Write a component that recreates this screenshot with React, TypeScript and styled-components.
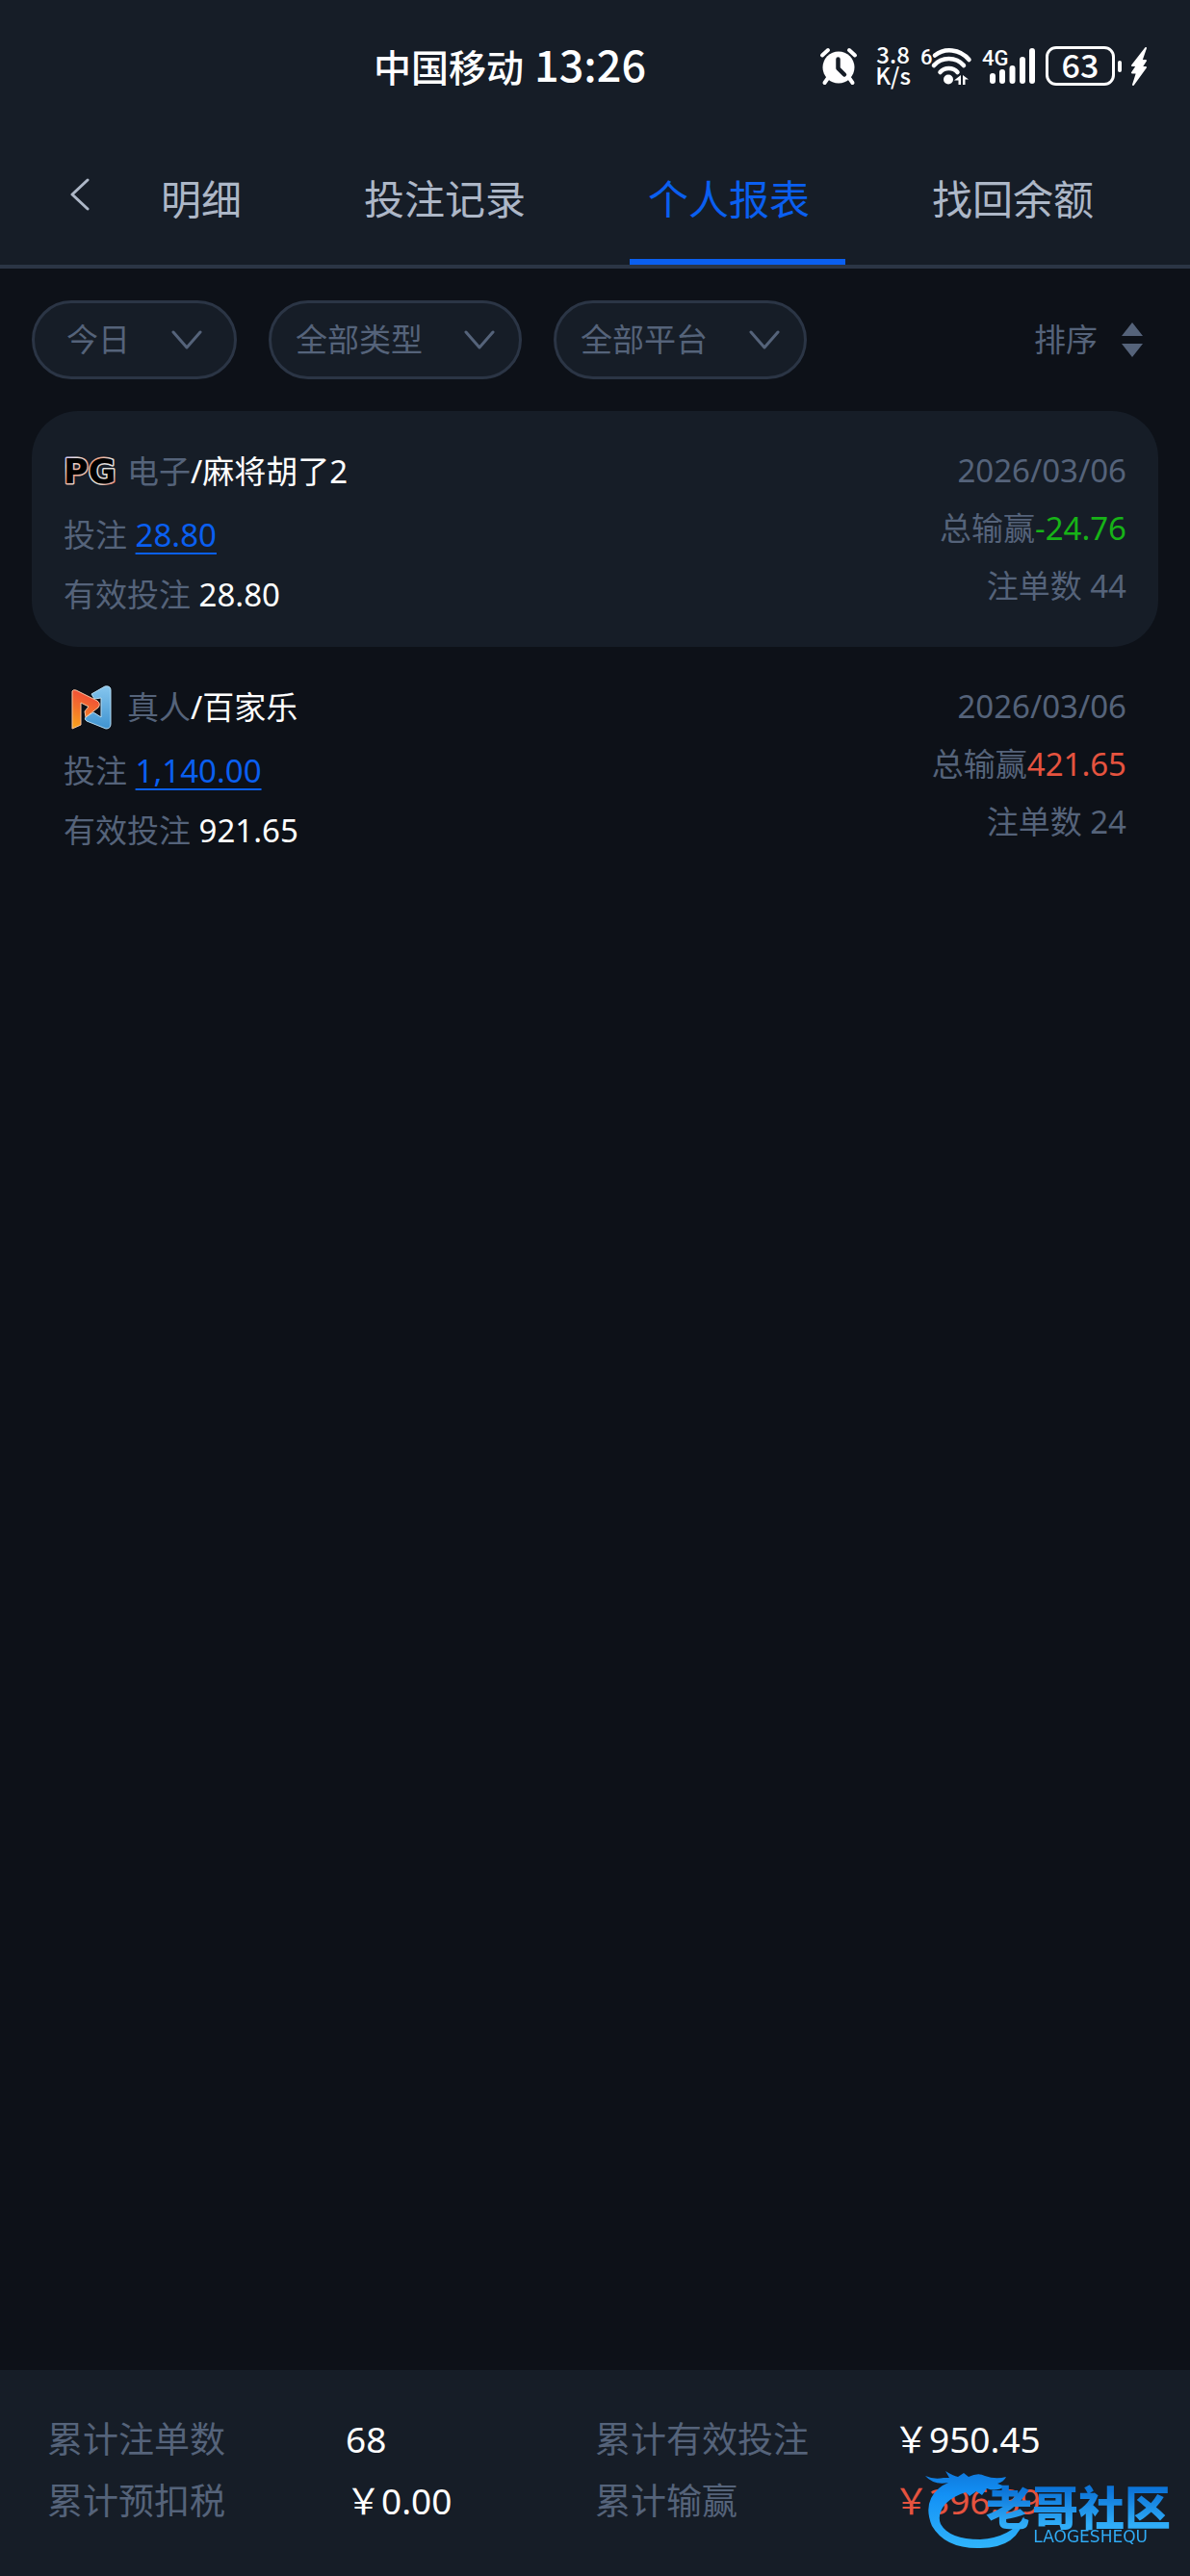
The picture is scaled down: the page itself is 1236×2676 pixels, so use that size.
import React from "react";
import styled, { createGlobalStyle } from "styled-components";

const color = {
  page: "#0d1118",
  panel: "#161d27",
  line: "#2b3545",
  muted: "#55637a",
  tab: "#adb7c7",
  blue: "#0a5ff0",
  green: "#17b317",
  red: "#e5533f",
  white: "#ffffff",
};

const GlobalStyle = createGlobalStyle`
  * { box-sizing: border-box; }
  body {
    margin: 0;
    background: ${color.page};
    font-family: "Noto Sans", "Noto Sans CJK SC", sans-serif;
    color: ${color.white};
  }
  button, select {
    margin: 0;
    font: inherit;
    color: inherit;
    background: none;
    border: 0;
    border-radius: 0;
    cursor: pointer;
  }
`;

const Screen = styled.div`
  display: flex;
  flex-direction: column;
  min-height: 100vh;
`;

const Header = styled.header`
  background: ${color.panel};
  border-bottom: 4px solid ${color.line};
`;

const StatusBar = styled.div`
  display: flex;
  align-items: center;
  justify-content: space-between;
  height: 125px;
  padding: 12px 45px 0 388px;
  font-family: "Noto Sans CJK SC", sans-serif;
  font-weight: 500;
`;

const Carrier = styled.div`
  display: flex;
  align-items: baseline;
  gap: 11px;
  padding-bottom: 4px;
  font-size: 39px;
  line-height: 56px;
`;

const Clock = styled.time`
  font-size: 45px;
`;

const StatusIcons = styled.div`
  display: flex;
  align-items: center;
  gap: 10px;
`;

const Speed = styled.div`
  margin-left: 8px;
  padding-bottom: 3px;
  font-size: 24px;
  line-height: 22px;
  text-align: center;
`;

const Battery = styled.div`
  display: flex;
  align-items: center;
  gap: 3px;
`;

const BatteryShell = styled.div`
  width: 72px;
  padding-bottom: 4px;
  border: 3px solid ${color.white};
  border-radius: 11px;
  font-size: 34px;
  line-height: 31px;
  text-align: center;
`;

const BatteryNub = styled.div`
  width: 4px;
  height: 12px;
  border-radius: 2px;
  background: ${color.white};
`;

const Nav = styled.nav`
  display: flex;
  height: 150px;
`;

const BackButton = styled.button`
  display: flex;
  align-items: center;
  width: 148px;
  padding: 4px 0 0 72px;
`;

const Tabs = styled.div`
  display: flex;
  flex: 1;
  gap: 71px;
`;

const Tab = styled.button<{ $active?: boolean }>`
  padding: 20px 37px 0 19px;
  border-bottom: 6px solid ${(p) => (p.$active ? color.blue : "transparent")};
  color: ${(p) => (p.$active ? color.blue : color.tab)};
  font-size: 42px;
  line-height: 60px;
  white-space: nowrap;
`;

const Main = styled.main`
  flex: 1;
  padding: 33px;
`;

const Filters = styled.div`
  display: flex;
  align-items: center;
  gap: 33px;
  margin-bottom: 33px;
  color: ${color.muted};
  font-size: 33px;
  line-height: 48px;
`;

const Pill = styled.label`
  display: grid;
  align-items: center;
`;

const PillSelect = styled.select<{ $inset: number }>`
  grid-area: 1 / 1;
  appearance: none;
  height: 82px;
  padding: 0 ${(p) => p.$inset + 75}px 0 ${(p) => p.$inset}px;
  border: 3px solid ${color.line};
  border-radius: 41px;
  background: ${color.panel};
`;

const PillArrow = styled.svg<{ $inset: number }>`
  grid-area: 1 / 1;
  justify-self: end;
  margin-right: ${(p) => p.$inset}px;
  pointer-events: none;
`;

const SortButton = styled.button`
  display: flex;
  align-items: center;
  gap: 25px;
  margin-left: auto;
  padding: 0 16px 0 0;
`;

const Card = styled.article<{ $filled?: boolean }>`
  display: flex;
  justify-content: space-between;
  height: 245px;
  padding: 32px 33px;
  border-radius: 48px;
  background: ${(p) => (p.$filled ? color.panel : "transparent")};
  color: ${color.muted};
  font-size: 33px;
  line-height: 62px;
`;

const CardTitle = styled.h2`
  display: flex;
  align-items: center;
  height: 62px;
  margin: 0 0 4px;
  font-size: 33px;
  font-weight: 400;
`;

const Brand = styled.span`
  display: flex;
  justify-content: center;
  width: 58px;
  margin-right: 8px;
`;

const Line = styled.div`
  white-space: pre;
`;

const RightSide = styled.div`
  text-align: right;
  line-height: 60px;
`;

const Value = styled.span<{ $tone?: string }>`
  color: ${(p) => p.$tone ?? color.white};
`;

const BetLink = styled.a`
  color: ${color.blue};
  text-decoration: underline;
  text-decoration-thickness: 2px;
  text-underline-offset: 6px;
`;

const Footer = styled.footer`
  position: relative;
  display: grid;
  grid-template-columns: 310fr 259fr 310fr 259fr;
  padding: 40px 49px 46px;
  background: ${color.panel};
  color: ${color.muted};
  font-size: 37px;
  line-height: 64px;
  white-space: nowrap;
`;

const Watermark = styled.div`
  position: absolute;
  right: 20px;
  bottom: 28px;
  width: 256px;
  height: 92px;
  pointer-events: none;
`;

const Dragon = styled.svg`
  position: absolute;
  left: 0;
  top: 0;
`;

const WatermarkText = styled.div`
  position: absolute;
  right: 0;
  bottom: 5px;
  display: flex;
  flex-direction: column;
  align-items: flex-end;
  background: linear-gradient(#0c74d8 15%, #30adf8 70%);
  background-clip: text;
  color: transparent;
  font-family: "Noto Sans CJK SC", sans-serif;
  font-size: 48px;
  line-height: 50px;
  font-weight: 900;
`;

const WatermarkLatin = styled.small`
  margin-right: 24px;
  font-family: "DejaVu Sans", sans-serif;
  font-size: 17px;
  line-height: 16px;
  font-weight: 400;
`;

const AlarmIcon = () => (
  <svg width="40" height="40" viewBox="0 0 40 40" aria-hidden="true">
    <g stroke="#fff" strokeWidth="4" strokeLinecap="round">
      <path d="M3 8.500L9 3M37 8.500L31 3M9 32L5.500 37M31 32l3.500 5" />
    </g>
    <circle cx="20" cy="21" r="16.500" fill="#fff" />
    <path d="M19.500 12.500V22l6.500 6.500" fill="none" stroke={color.panel} strokeWidth="4.500" strokeLinecap="round" strokeLinejoin="round" />
  </svg>
);

const WifiIcon = () => (
  <svg width="54" height="42" viewBox="0 0 54 42" aria-hidden="true">
    <text x="0" y="19" fill="#fff" fontSize="22" fontWeight="500" fontFamily="Roboto, sans-serif">6</text>
    <g fill="none" stroke="#fff" strokeWidth="4.500" strokeLinecap="round">
      <path d="M15 9.500C25 1.500 41 2.500 50.500 14" />
      <path d="M14 20C22 10.500 37 10.500 45 20" />
      <path d="M20.500 27C25 21.500 34 21.500 38.500 27" />
    </g>
    <circle cx="29" cy="34.500" r="5" fill="#fff" />
    <path d="M42 30v10h-2.500v-4.500H35zM44 40V30l6 4.500h-3.500V40z" fill="#fff" />
  </svg>
);

const SignalIcon = () => (
  <svg width="56" height="42" viewBox="0 0 56 42" aria-hidden="true">
    <text x="0" y="20" fill="#fff" fontSize="22" fontWeight="500" fontFamily="Roboto, sans-serif">4G</text>
    <g stroke="#fff" strokeWidth="6" strokeLinecap="round">
      <path d="M11 31v5M21 27v9M31.500 23v13M42 14v22M52 5v31" />
    </g>
  </svg>
);

const BoltIcon = () => (
  <svg width="16" height="40" viewBox="0 0 16 40" aria-hidden="true">
    <path d="M15 1L1 19H6L1 26.500H6L2 39L15 21H10.500L15 14H10.500z" fill="#fff" stroke="#fff" strokeWidth="2" strokeLinejoin="round" />
  </svg>
);

const ChevronLeft = () => (
  <svg width="21" height="34" viewBox="0 0 21 34" aria-hidden="true">
    <path d="M19 2L3 17L19 32" fill="none" stroke={color.tab} strokeWidth="3" strokeLinecap="round" strokeLinejoin="round" />
  </svg>
);

const SortIcon = () => (
  <svg width="22" height="36" viewBox="0 0 22 36" aria-hidden="true">
    <path d="M11 0L22 14H0zM0 22H22L11 36z" fill={color.muted} />
  </svg>
);

const PgLogo = () => (
  <svg width="58" height="44" viewBox="0 0 58 44" role="img" aria-label="PG">
    <defs>
      <linearGradient id="pgEdge" x1="0" y1="0" x2="1" y2="1">
        <stop offset="0" stopColor="#b9a4f0" />
        <stop offset="0.2" stopColor="#e8e2df" />
        <stop offset="0.4" stopColor="#f0a58a" />
        <stop offset="0.55" stopColor="#dfe5e6" />
        <stop offset="0.75" stopColor="#e6dfd2" />
        <stop offset="1" stopColor="#e8503c" />
      </linearGradient>
    </defs>
    <text x="0" y="34" fill="#000" stroke="url(#pgEdge)" strokeWidth="3" strokeLinejoin="round" paintOrder="stroke" fontFamily="DejaVu Sans, sans-serif" fontWeight="700" fontSize="35">PG</text>
  </svg>
);

const LiveLogo = () => (
  <svg width="42" height="46" viewBox="0 0 42 46" aria-hidden="true">
    <defs>
      <linearGradient id="liveWarm" x1="0.500" y1="0" x2="0.200" y2="1">
        <stop offset="0" stopColor="#f0493a" />
        <stop offset="0.500" stopColor="#f4712b" />
        <stop offset="1" stopColor="#f8a21c" />
      </linearGradient>
      <linearGradient id="liveCool" x1="0" y1="0" x2="0" y2="1">
        <stop offset="0" stopColor="#86c6ee" />
        <stop offset="1" stopColor="#3f93d0" />
      </linearGradient>
    </defs>
    <path d="M21 9L35 1Q41 0 41 5V40Q41 45 36 45L16 37Q13 35 15 33L23 28L31 33V13L24 14Z" fill="url(#liveCool)" stroke="#b8def4" strokeWidth="1" strokeLinejoin="round" />
    <path d="M1 6Q2 4 5 5L27 16Q31 19 28 23L15 33L14 27L18 22L10 18V41L1 45Z" fill="url(#liveWarm)" stroke="#f9c9a8" strokeWidth="1" strokeLinejoin="round" />
  </svg>
);

const Filter = ({ name, value, inset }: { name: string; value: string; inset: number }) => (
  <Pill>
    <PillSelect $inset={inset} name={name} aria-label={value} defaultValue={value}>
      <option>{value}</option>
    </PillSelect>
    <PillArrow $inset={inset + 3} width="32" height="21" viewBox="0 0 32 21" aria-hidden="true">
      <path d="M2 2L16 18L30 2" fill="none" stroke={color.muted} strokeWidth="3" strokeLinecap="round" strokeLinejoin="round" />
    </PillArrow>
  </Pill>
);

type Report = {
  logo: React.ReactNode;
  kind: string;
  game: string;
  bet: string;
  valid: string;
  date: string;
  result: string;
  tone: string;
  count: number;
};

const reports: Report[] = [
  { logo: <PgLogo />, kind: "电子", game: "麻将胡了2", bet: "28.80", valid: "28.80", date: "2026/03/06", result: "-24.76", tone: color.green, count: 44 },
  { logo: <LiveLogo />, kind: "真人", game: "百家乐", bet: "1,140.00", valid: "921.65", date: "2026/03/06", result: "421.65", tone: color.red, count: 24 },
];

const ReportCard = ({ report, filled }: { report: Report; filled: boolean }) => (
  <Card $filled={filled}>
    <div>
      <CardTitle>
        <Brand>{report.logo}</Brand>
        <span>{report.kind}<Value>/{report.game}</Value></span>
      </CardTitle>
      <Line>投注 <BetLink href="#bets">{report.bet}</BetLink></Line>
      <Line>有效投注 <Value>{report.valid}</Value></Line>
    </div>
    <RightSide>
      <Line>{report.date}</Line>
      <Line>总输赢<Value $tone={report.tone}>{report.result}</Value></Line>
      <Line>注单数 {report.count}</Line>
    </RightSide>
  </Card>
);

const tabs = ["明细", "投注记录", "个人报表", "找回余额"];

export default function App() {
  const [active, setActive] = React.useState("个人报表");
  return (
    <Screen>
      <GlobalStyle />
      <Header>
        <StatusBar>
          <Carrier>中国移动<Clock>13:26</Clock></Carrier>
          <StatusIcons>
            <AlarmIcon />
            <Speed>3.8<br />K/s</Speed>
            <WifiIcon />
            <SignalIcon />
            <Battery>
              <BatteryShell>63</BatteryShell>
              <BatteryNub />
            </Battery>
            <BoltIcon />
          </StatusIcons>
        </StatusBar>
        <Nav>
          <BackButton type="button" aria-label="返回"><ChevronLeft /></BackButton>
          <Tabs role="tablist">
            {tabs.map((tab) => (
              <Tab key={tab} type="button" role="tab" aria-selected={tab === active} $active={tab === active} onClick={() => setActive(tab)}>
                {tab}
              </Tab>
            ))}
          </Tabs>
        </Nav>
      </Header>
      <Main>
        <Filters>
          <Filter name="date" value="今日" inset={33} />
          <Filter name="type" value="全部类型" inset={25} />
          <Filter name="platform" value="全部平台" inset={25} />
          <SortButton type="button">排序<SortIcon /></SortButton>
        </Filters>
        {reports.map((report, index) => (
          <ReportCard key={report.game} report={report} filled={index % 2 === 0} />
        ))}
      </Main>
      <Footer>
        <span>累计注单数</span>
        <Value>68</Value>
        <span>累计有效投注</span>
        <Value>￥950.45</Value>
        <span>累计预扣税</span>
        <Value>￥0.00</Value>
        <span>累计输赢</span>
        <Value $tone={color.red}>￥396.39</Value>
        <Watermark>
          <Dragon width="110" height="92" viewBox="0 0 110 92" aria-hidden="true">
            <defs>
              <linearGradient id="dragonFill" x1="0" y1="0" x2="0" y2="1">
                <stop offset="0" stopColor="#0f78dc" />
                <stop offset="0.300" stopColor="#1290f5" />
                <stop offset="1" stopColor="#30b4fb" />
              </linearGradient>
            </defs>
            <path d="M1 16Q10 20 20 18L26 18L22 11Q30 16 35 17L41 13L46 17Q56 12 63 16Q74 20 85 17Q83 22 76 24L84 27Q74 33 65 29L60 36L54 32L47 37L43 33Q30 37 22 45Q13 56 17 66Q26 82 58 82Q90 80 104 58Q98 91 58 91Q22 92 8 68Q-2 44 15 29Q20 25 25 23Q10 26 1 16Z" fill="url(#dragonFill)" />
          </Dragon>
          <WatermarkText>
            老哥社区
            <WatermarkLatin>LAOGESHEQU</WatermarkLatin>
          </WatermarkText>
        </Watermark>
      </Footer>
    </Screen>
  );
}
